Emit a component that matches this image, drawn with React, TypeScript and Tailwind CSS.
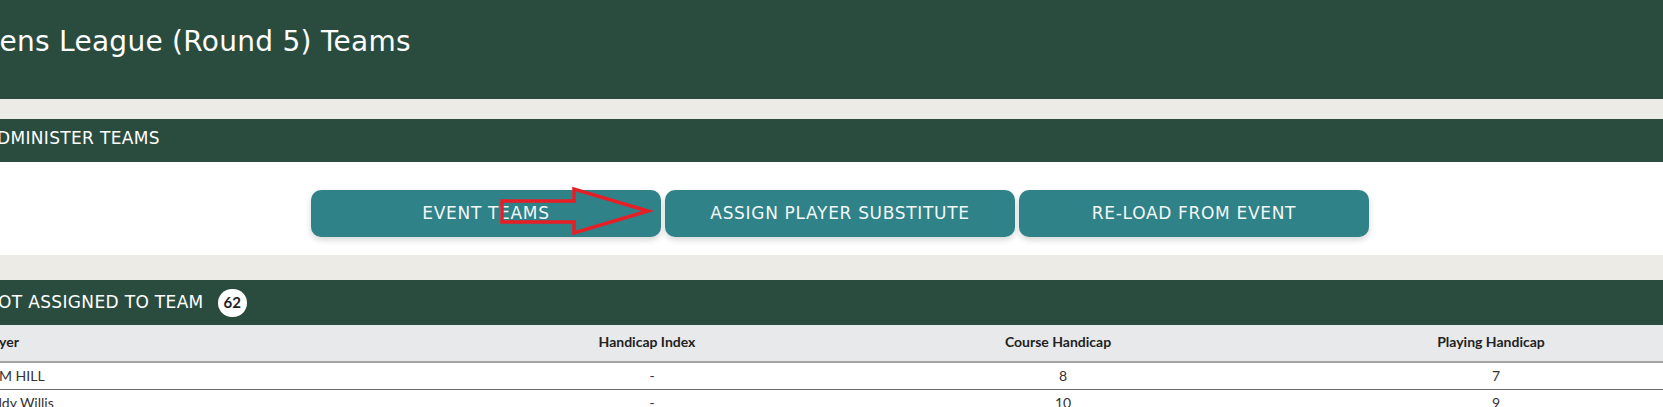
import React from "react";

const players = [
  { name: "TOM HILL", index: "-", course: "8", playing: "7" },
  { name: "Teddy Willis", index: "-", course: "10", playing: "9" },
];

const actions = ["Event Teams", "Assign Player Substitute", "Re-load From Event"];

export default function App() {
  return (
    <div className="relative w-[1663px] h-[407px] overflow-hidden bg-[#edebe6] font-['Lato',sans-serif]">
      {/* Page header */}
      <div className="h-[99px] bg-[#2a4c3f] text-white flex flex-col font-['DejaVu_Sans',sans-serif]">
        <div className="ml-[18px] mt-[-13px] text-[13px] leading-[16px] text-white/90">
          Back to Event List
        </div>
        <h1 className="ml-[-25px] mt-[22px] text-[28px] leading-[34px] font-normal tracking-[0.01em]">
          Mens League (Round 5) Teams
        </h1>
      </div>

      {/* Administer teams */}
      <div className="mt-[20px] h-[43px] bg-[#2a4c3f] flex items-center pb-[4px] font-['DejaVu_Sans',sans-serif]">
        <span className="ml-[-15px] text-[17px] text-white uppercase tracking-[0.02em]">
          Administer Teams
        </span>
      </div>
      <div className="h-[93px] bg-white pt-[28px]">
        <div className="flex gap-[4px] pl-[311px]">
          {actions.map((a) => (
            <button
              key={a}
              className="w-[350px] h-[47px] rounded-[10px] bg-[#2e8288] text-[#f4f7f7] text-[17px] tracking-[0.04em] uppercase font-['DejaVu_Sans',sans-serif] shadow-[0_3px_6px_rgba(0,0,0,0.16)]"
            >
              {a}
            </button>
          ))}
        </div>
      </div>

      {/* Not assigned */}
      <div className="mt-[25px] h-[45px] bg-[#2a4c3f] flex items-center">
        <span className="ml-[-15px] text-[17px] text-white uppercase tracking-[0.02em] font-['DejaVu_Sans',sans-serif]">
          Not Assigned To Team
        </span>
        <span className="ml-[14px] w-[29px] h-[28px] rounded-full bg-white text-[#222] text-[15px] font-bold flex items-center justify-center">
          62
        </span>
      </div>

      <div className="bg-white text-[14px] text-[#333]">
        <div className="grid grid-cols-[507px_290px_532px_334px] h-[38px] pb-[3px] bg-[#e8e9eb] border-b-[2px] border-[#a3a3a3] items-center font-bold text-[#222]">
          <div className="ml-[-20px]">Player</div>
          <div className="text-center pr-[10px]">Handicap Index</div>
          <div className="text-center pr-[10px]">Course Handicap</div>
          <div className="text-center pr-[10px]">Playing Handicap</div>
        </div>
        {players.map((p) => (
          <div
            key={p.name}
            className="grid grid-cols-[507px_290px_532px_334px] h-[27px] pb-[2px] border-b border-[#6e6e6e] items-center"
          >
            <div className="ml-[-20px]">{p.name}</div>
            <div className="text-center">{p.index}</div>
            <div className="text-center">{p.course}</div>
            <div className="text-center">{p.playing}</div>
          </div>
        ))}
      </div>

      {/* Annotation arrow */}
      <svg className="absolute left-0 top-0 pointer-events-none" width="1663" height="407">
        <polygon
          points="502,201 574,201 574,189 648,211 574,233 574,222 502,222"
          fill="none"
          stroke="#e81e26"
          strokeWidth="3.5"
        />
      </svg>
    </div>
  );
}
